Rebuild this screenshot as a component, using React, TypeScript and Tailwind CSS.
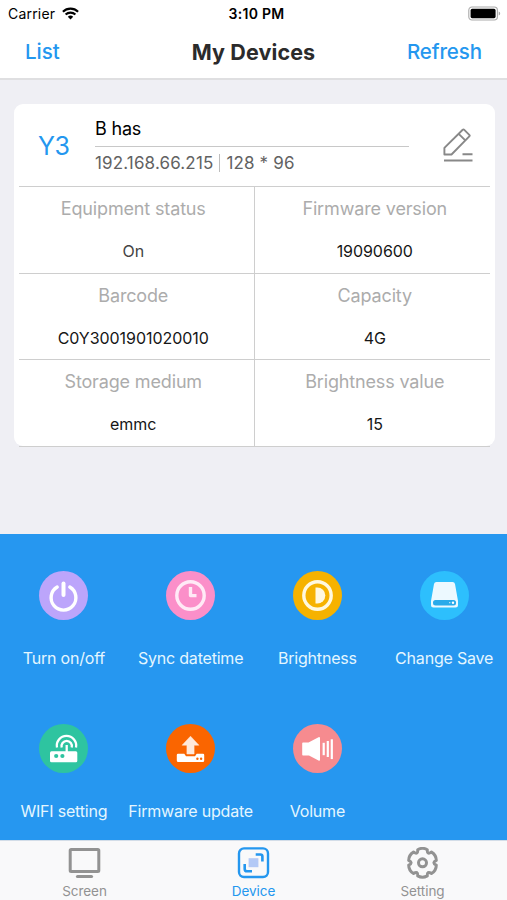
import type { ReactNode } from "react";
import clsx from "clsx";

export default function App() {
  return (
    <div className="flex h-[900px] w-[507px] flex-col overflow-hidden bg-[#efeff4] font-['Inter','Liberation_Sans',sans-serif] text-black">
      <Header />
      <main className="flex-1 px-[14px] pt-6">
        <DeviceCard />
      </main>
      <ActionPanel />
      <TabBar />
    </div>
  );
}

const Header = () => (
  <header className="h-20 border-b-2 border-[#dfdfe1] bg-white">
    <div className="grid h-[27px] grid-cols-3 items-center pl-2 pr-[6px] text-[14px]">
      <div className="flex items-center gap-[7px]">
        <span className="tracking-[0.2px]">Carrier</span>
        <WifiIcon />
      </div>
      <span className="pl-1 text-center text-[14px] font-semibold tracking-[0.3px]">3:10 PM</span>
      <div className="flex justify-end">
        <BatteryIcon />
      </div>
    </div>
    <nav className="grid h-[51px] grid-cols-3 items-center px-[25px] text-[20.5px] text-[#2497ef]">
      <a className="font-medium">List</a>
      <h1 className="text-center text-[21.5px] font-bold tracking-[0.1px] whitespace-nowrap text-[#2b2b2b]">My Devices</h1>
      <a className="text-right font-medium tracking-[-0.1px]">Refresh</a>
    </nav>
  </header>
);

const info = [
  { label: "Equipment status", value: "On", muted: true },
  { label: "Firmware version", value: "19090600" },
  { label: "Barcode", value: "C0Y3001901020010" },
  { label: "Capacity", value: "4G" },
  { label: "Storage medium", value: "emmc" },
  { label: "Brightness value", value: "15" },
];

const DeviceCard = () => (
  <section className="h-[342px] w-[481px] rounded-[9px] bg-white px-[5px]">
    <div className="flex h-[83px] border-b-[1.5px] border-[#cecece]">
      <div className="flex w-[76px] items-center pl-[19px] pt-[4px] text-[25px] tracking-[-0.4px] text-[#2497ef]">Y3</div>
      <div className="w-[314px]">
        <div className="flex h-[43px] items-center border-b-[1.5px] border-[#c8c8c8] pt-[6px] text-[18px] tracking-[-0.2px]">B has</div>
        <div className="flex h-[34px] items-center text-[17px] tracking-[0.15px] text-[#626262]">
          <span>192.168.66.215</span>
          <span className="mx-[6px] mb-[2px] h-[18px] w-px bg-[#bdbdbd]" />
          <span>128 * 96</span>
        </div>
      </div>
      <div className="pl-[33px] pt-[24px]">
        <EditIcon />
      </div>
    </div>
    <dl className="grid grid-cols-2 grid-rows-[87px_86px_87px]">
      {info.map((item, i) => (
        <div
          key={item.label}
          className={clsx(
            "flex flex-col items-center border-b-[1.5px] border-[#cecece]",
            i % 2 === 0 ? "border-r-[1.5px] pr-[6px]" : "pl-[5px]"
          )}
        >
          <dt className="mt-2 h-[27px] text-[18px] leading-[27px] tracking-[-0.15px] text-[#acacac]">{item.label}</dt>
          <dd className={clsx("mt-[17px] text-[16px] leading-6 tracking-[-0.05px]", item.muted ? "text-[#444]" : "text-[#161616]")}>
            {item.value}
          </dd>
        </div>
      ))}
    </dl>
  </section>
);

const actions: { label: string; color: string; icon: ReactNode }[] = [
  {
    label: "Turn on/off",
    color: "bg-[#bca5fb]",
    icon: (
      <g fill="none" stroke="#fff" strokeLinecap="round">
        <path d="M18.2 16A12.4 12.4 0 1 0 30.8 16" strokeWidth="3.4" />
        <path d="M24.5 12.5v11.5" strokeWidth="4" />
      </g>
    ),
  },
  {
    label: "Sync datetime",
    color: "bg-[#fb8fc9]",
    icon: (
      <g fill="none" stroke="#ffeaf6">
        <circle cx="24.5" cy="24.5" r="13.7" strokeWidth="3.4" />
        <path d="M24.5 16v8.6h6" strokeWidth="3.4" strokeLinejoin="round" />
      </g>
    ),
  },
  {
    label: "Brightness",
    color: "bg-[#f6b200]",
    icon: (
      <g fill="#fff8e0">
        <circle cx="24.5" cy="24.5" r="13.7" fill="none" stroke="#fff8e0" strokeWidth="3.4" />
        <path d="M22.5 16.5h1.8a8 8 0 0 1 0 16h-1.8z" />
      </g>
    ),
  },
  {
    label: "Change Save",
    color: "bg-[#2dbffd]",
    icon: (
      <>
        <path d="M16.5 11h16a2.5 2.5 0 0 1 2.5 2l3 17v4a2.5 2.5 0 0 1-2.5 2.5h-22A2.5 2.5 0 0 1 11 34v-4l3-17a2.5 2.5 0 0 1 2.5-2z" fill="#ecf9ff" />
        <rect x="13" y="29" width="23" height="5.4" rx="2.5" fill="#29aaea" />
        <circle cx="33" cy="31.7" r="1.2" fill="#fff" />
        <circle cx="29.8" cy="31.7" r=".6" fill="#fff" />
      </>
    ),
  },
  {
    label: "WIFI setting",
    color: "bg-[#2ec4a0]",
    icon: (
      <>
        <g fill="none" stroke="#fff" strokeWidth="2.3">
          <path d="M18 23.5a9.7 9.7 0 1 1 19 0" />
          <path d="M22.7 23.5a5.2 5.2 0 1 1 10 0" />
          <path d="M27.7 21v8" />
        </g>
        <rect x="11" y="27.3" width="27.3" height="11" rx="1.5" fill="#fff" />
        <circle cx="17.2" cy="32" r="2.1" fill="#2ec4a0" />
        <circle cx="23.4" cy="32" r="2.1" fill="#2ec4a0" />
      </>
    ),
  },
  {
    label: "Firmware update",
    color: "bg-[#fa6500]",
    icon: (
      <>
        <path d="M24.5 12.2l8.4 9h-4.8V30h-7.2v-8.8h-4.8z" fill="#ffe9da" stroke="#ffe9da" strokeWidth=".5" strokeLinejoin="round" />
        <path d="M12 29.8h6.3l1.7 2.4h9l1.7-2.4H37a1.2 1.2 0 0 1 1.2 1.2v5.6a1.5 1.5 0 0 1-1.5 1.5H12.3a1.5 1.5 0 0 1-1.5-1.5V31a1.2 1.2 0 0 1 1.2-1.2z" fill="#fff" />
        <circle cx="31.4" cy="34.8" r="1.2" fill="#fa6500" />
        <circle cx="35.1" cy="34.8" r="1.2" fill="#fa6500" />
      </>
    ),
  },
  {
    label: "Volume",
    color: "bg-[#f68b8f]",
    icon: (
      <>
        <path d="M10 18.4h5.5l10-5.2q1.5-.5 1.5 1v21.2q0 2-1.5 1.1l-9.5-5H10q-.8 0-.8-.8V19.2q0-.8.8-.8z" fill="#fff" />
        <g stroke="#fff" strokeWidth="2.2">
          <path d="M30.7 18.8v12.4" />
          <path d="M34.8 17v16" />
          <path d="M38.8 15.3v19.8" />
        </g>
      </>
    ),
  },
];

const ActionPanel = () => (
  <section className="grid h-[306px] grid-cols-4 grid-rows-[153px_153px] bg-[#2697f0]">
    {actions.map((action) => (
      <button key={action.label} className="flex flex-col items-center pt-[37px] pl-px">
        <span className={clsx("size-[49px] rounded-full", action.color)}>
          <svg viewBox="0 0 49 49" className="size-[49px]">{action.icon}</svg>
        </span>
        <span className="mt-[26px] text-[16px] leading-6 tracking-[-0.2px] whitespace-nowrap text-[#e4f6ff]">{action.label}</span>
      </button>
    ))}
  </section>
);

const TabBar = () => (
  <footer className="grid h-[60px] grid-cols-3 border-t border-[#d3dde8] bg-[#f9f9fa] text-[13.5px] text-[#929292]">
    <Tab label="Screen">
      <rect x="2.2" y="2.4" width="28.6" height="22.2" rx="1" strokeWidth="3" />
      <path d="M9.5 29.5h14" strokeWidth="3.2" strokeLinecap="round" />
    </Tab>
    <Tab label="Device" active>
      <rect x="2" y="1.4" width="29" height="28.6" rx="5" strokeWidth="2.4" />
      <rect x="11.6" y="11.2" width="9.8" height="9" fill="#b3c9f6" stroke="none" />
      <path d="M18.7 7.5h4.7q2 0 2 2v5" strokeWidth="2.6" />
      <path d="M7.7 17v4.9q0 2.3 2.3 2.3h5" strokeWidth="2.6" />
    </Tab>
    <Tab label="Setting">
      <g transform="translate(16.5 15.8)">
        <path
          d="M-4.8-13.1Q0-15.8 4.8-13.1Q4.4-7.7 9-10.7Q13.7-7.9 13.8-2.4Q8.9 0 13.8 2.4Q13.7 7.9 9 10.7Q4.4 7.7 4.8 13.1Q0 15.8-4.8 13.1Q-4.4 7.7-9 10.7Q-13.7 7.9-13.8 2.4Q-8.9 0-13.8-2.4Q-13.7-7.9-9-10.7Q-4.4-7.7-4.8-13.1z"
          strokeWidth="3"
          strokeLinejoin="round"
        />
        <circle r="4" strokeWidth="3" />
      </g>
    </Tab>
  </footer>
);

const Tab = (props: { label: string; active?: boolean; children: ReactNode }) => (
  <button className={clsx("flex flex-col items-center pt-[6px]", props.active && "text-[#2497ef]")}>
    <svg width="33" height="33" viewBox="0 0 33 33" fill="none" stroke="currentColor">
      {props.children}
    </svg>
    <span className="mt-px leading-5 tracking-[-0.05px]">{props.label}</span>
  </button>
);

const WifiIcon = () => (
  <svg width="17" height="13" viewBox="0 0 17 13" fill="none" stroke="#000" strokeWidth="2.1">
    <path d="M.9 4.7a11 11 0 0 1 15.2 0" />
    <path d="M3.6 7.6a7.1 7.1 0 0 1 9.8 0" />
    <path d="M8.5 12.6L5.8 9.8a4 4 0 0 1 5.4 0z" fill="#000" stroke="none" />
  </svg>
);

const BatteryIcon = () => (
  <svg width="33" height="16" viewBox="0 0 33 16">
    <rect x=".8" y="1" width="28.6" height="13" rx="3.2" fill="none" stroke="#a9a9a9" strokeWidth="1.1" />
    <rect x="2.6" y="2.8" width="25" height="9.4" rx="1.6" />
    <path d="M30.7 5.4v4.2q1.5-.6 1.5-2.1t-1.5-2.1z" fill="#a9a9a9" />
  </svg>
);

const EditIcon = () => (
  <svg width="32" height="36" viewBox="0 0 32 36" fill="none" stroke="#888" strokeWidth="1.9">
    <path d="M2.4 26.5v-6.6L20.7 1.8q.8-.8 1.6 0l5 5q.8.8 0 1.6L9.5 26.5z" strokeLinejoin="round" />
    <path d="M16.7 5.8l6.6 6.6M20.5 26.3h10M2 32.5h28.5" />
  </svg>
);
